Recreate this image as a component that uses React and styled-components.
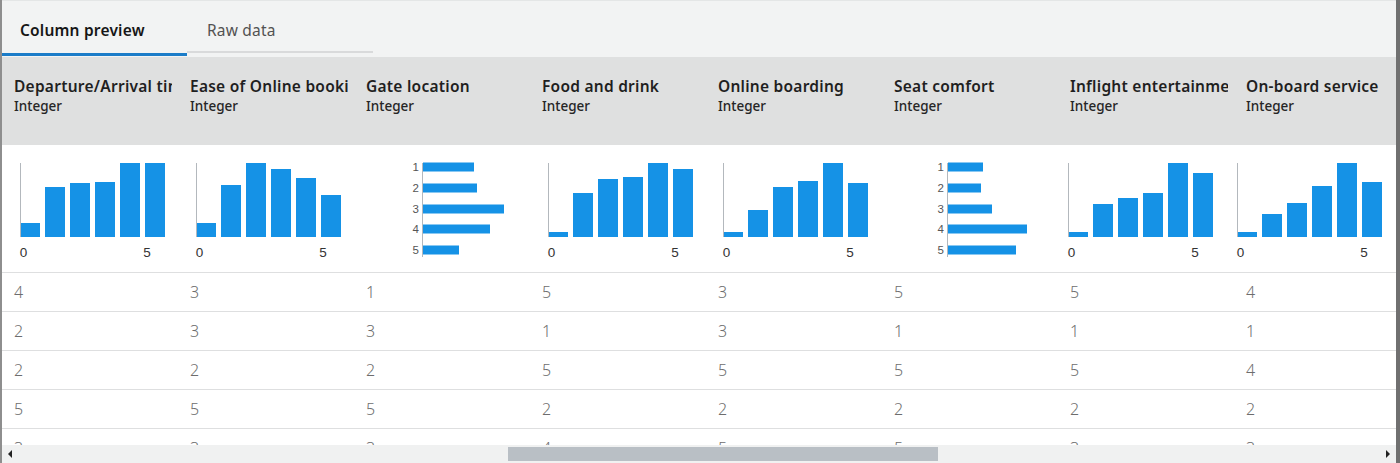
import React from "react";
import styled, { createGlobalStyle } from "styled-components";

const GlobalStyle = createGlobalStyle`
  html, body { margin: 0; padding: 0; background: #ffffff; }
  * { box-sizing: border-box; }
`;

const COL_W = 176;

const columns = [
  { name: "Departure/Arrival time convenient", kind: "v", axis: 18, bars: [14, 50, 54, 55, 74, 74], cells: [4, 2, 2, 5, 3] },
  { name: "Ease of Online booking", kind: "v", axis: 18, bars: [14, 52, 74, 68, 59, 42], cells: [3, 3, 2, 5, 3] },
  { name: "Gate location", kind: "h", axis: 68, bars: [51, 54, 81, 67, 36], cells: [1, 3, 2, 5, 3] },
  { name: "Food and drink", kind: "v", axis: 18, bars: [5, 44, 58, 60, 74, 68], cells: [5, 1, 5, 2, 4] },
  { name: "Online boarding", kind: "v", axis: 17, bars: [5, 27, 50, 56, 74, 54], cells: [3, 3, 5, 2, 5] },
  { name: "Seat comfort", kind: "h", axis: 65, bars: [35, 33, 44, 79, 68], cells: [5, 1, 5, 2, 5] },
  { name: "Inflight entertainment", kind: "v", axis: 10, bars: [5, 33, 39, 44, 74, 64], cells: [5, 1, 5, 2, 3] },
  { name: "On-board service", kind: "v", axis: 3, bars: [5, 23, 34, 51, 74, 55], cells: [4, 1, 4, 2, 3] },
];

const Frame = styled.div`
  width: 1400px;
  height: 463px;
  display: flex;
  flex-direction: column;
  border-left: 2px solid #8e8e8e;
  border-right: 4px solid #707070;
  background: #ffffff;
  font-family: "Noto Sans", "Open Sans", sans-serif;
  overflow: hidden;
`;

const TabBar = styled.div`
  height: 57px;
  flex: none;
  display: flex;
  align-items: flex-start;
  background: #f2f3f3;
  border-top: 1px solid #e4e6e6;
`;

const Tab = styled.div`
  width: ${(p) => p.$w}px;
  height: 55px;
  padding: 6px 0 0 ${(p) => p.$pad}px;
  display: flex;
  align-items: center;
  font-size: 15.5px;
  letter-spacing: 0.2px;
  color: ${(p) => (p.$active ? "#161616" : "#525252")};
  font-weight: ${(p) => (p.$active ? 600 : 400)};
  border-bottom: ${(p) => (p.$active ? "3px solid #1b7cc8" : "3px solid transparent")};
  box-shadow: ${(p) => (p.$active ? "none" : "inset 0 -2px 0 #d9dadb")};
`;

const Viewport = styled.div`
  flex: 1;
  overflow: hidden;
`;

const Grid = styled.div`
  display: grid;
  grid-template-columns: repeat(${columns.length}, ${COL_W}px);
  grid-template-rows: 88px 128px repeat(5, 39px);
  width: max-content;
`;

const HeaderCell = styled.div`
  background: #dfe0e0;
  padding: 19px 0 0 12px;
`;

const Title = styled.div`
  font-size: 15.5px;
  font-weight: 600;
  letter-spacing: 0.25px;
  line-height: 21px;
  color: #1f1f1f;
  white-space: nowrap;
  overflow: hidden;
  margin-right: 6px;
`;

const Type = styled.div`
  font-size: 13.5px;
  font-weight: 500;
  line-height: 18px;
  color: #262626;
`;

const ChartCell = styled.div`
  border-bottom: 1px solid #dedfe0;
  background: #ffffff;
  svg { display: block; }
`;

const DataCell = styled.div`
  border-bottom: 1px solid #dedfe0;
  padding: 0 0 0 12px;
  display: flex;
  align-items: center;
  font-size: 16px;
  font-weight: 300;
  color: #6d6d6d;
`;

const ScrollBar = styled.div`
  height: 18px;
  flex: none;
  display: flex;
  align-items: center;
  background: #f0f1f1;
  padding: 0 6px;
`;

const Arrow = styled.div`
  width: 0;
  height: 0;
  border-top: 4px solid transparent;
  border-bottom: 4px solid transparent;
  ${(p) => (p.$dir === "left" ? "border-right: 4px solid #222;" : "border-left: 4px solid #222;")}
`;

const Track = styled.div`
  flex: 1;
  height: 14px;
  display: flex;
  padding-left: ${(p) => p.$offset}px;
`;

const Thumb = styled.div`
  width: ${(p) => p.$w}px;
  height: 14px;
  background: #b9bfc5;
`;

const BLUE = "#1592e6";
const AXIS = "#b3b8bd";
const LABEL_FONT = "Liberation Sans, Arial, sans-serif";

function VChart({ axis, bars }) {
  return (
    <svg width={COL_W} height={127}>
      {bars.map((h, i) => (
        <rect key={i} x={axis + i * 25} y={92 - h} width={20} height={h} fill={BLUE} />
      ))}
      <line x1={axis + 0.5} x2={axis + 0.5} y1={18} y2={92} stroke={AXIS} strokeWidth={1} />
      <text x={axis + 3.5} y={112} fontSize={13.5} fill="#333" textAnchor="middle" fontFamily={LABEL_FONT}>0</text>
      <text x={axis + 127} y={112} fontSize={13.5} fill="#333" textAnchor="middle" fontFamily={LABEL_FONT}>5</text>
    </svg>
  );
}

const CENTERS = [22, 43, 64, 84, 105];

function HChart({ axis, bars }) {
  return (
    <svg width={COL_W} height={127}>
      {bars.map((w, i) => (
        <g key={i}>
          <rect x={axis + 1} y={CENTERS[i] - 4.5} width={w} height={9} fill={BLUE} />
          <text x={axis - 3} y={CENTERS[i] + 4} fontSize={11.5} fill="#555" textAnchor="end" fontFamily={LABEL_FONT}>
            {i + 1}
          </text>
        </g>
      ))}
      <line x1={axis + 0.5} x2={axis + 0.5} y1={18} y2={112} stroke={AXIS} strokeWidth={1} />
    </svg>
  );
}

export default function App() {
  const rows = [0, 1, 2, 3, 4];
  return (
    <>
      <GlobalStyle />
      <Frame>
        <TabBar>
          <Tab $active $w={185} $pad={18}>Column preview</Tab>
          <Tab $w={186} $pad={20}>Raw data</Tab>
        </TabBar>
        <Viewport>
          <Grid>
            {columns.map((c) => (
              <HeaderCell key={"h" + c.name}>
                <Title>{c.name}</Title>
                <Type>Integer</Type>
              </HeaderCell>
            ))}
            {columns.map((c) => (
              <ChartCell key={"c" + c.name}>
                {c.kind === "v" ? <VChart axis={c.axis} bars={c.bars} /> : <HChart axis={c.axis} bars={c.bars} />}
              </ChartCell>
            ))}
            {rows.map((r) =>
              columns.map((c) => <DataCell key={r + c.name}>{c.cells[r]}</DataCell>)
            )}
          </Grid>
        </Viewport>
        <ScrollBar>
          <Arrow $dir="left" />
          <Track $offset={496}>
            <Thumb $w={430} />
          </Track>
          <Arrow $dir="right" />
        </ScrollBar>
      </Frame>
    </>
  );
}
